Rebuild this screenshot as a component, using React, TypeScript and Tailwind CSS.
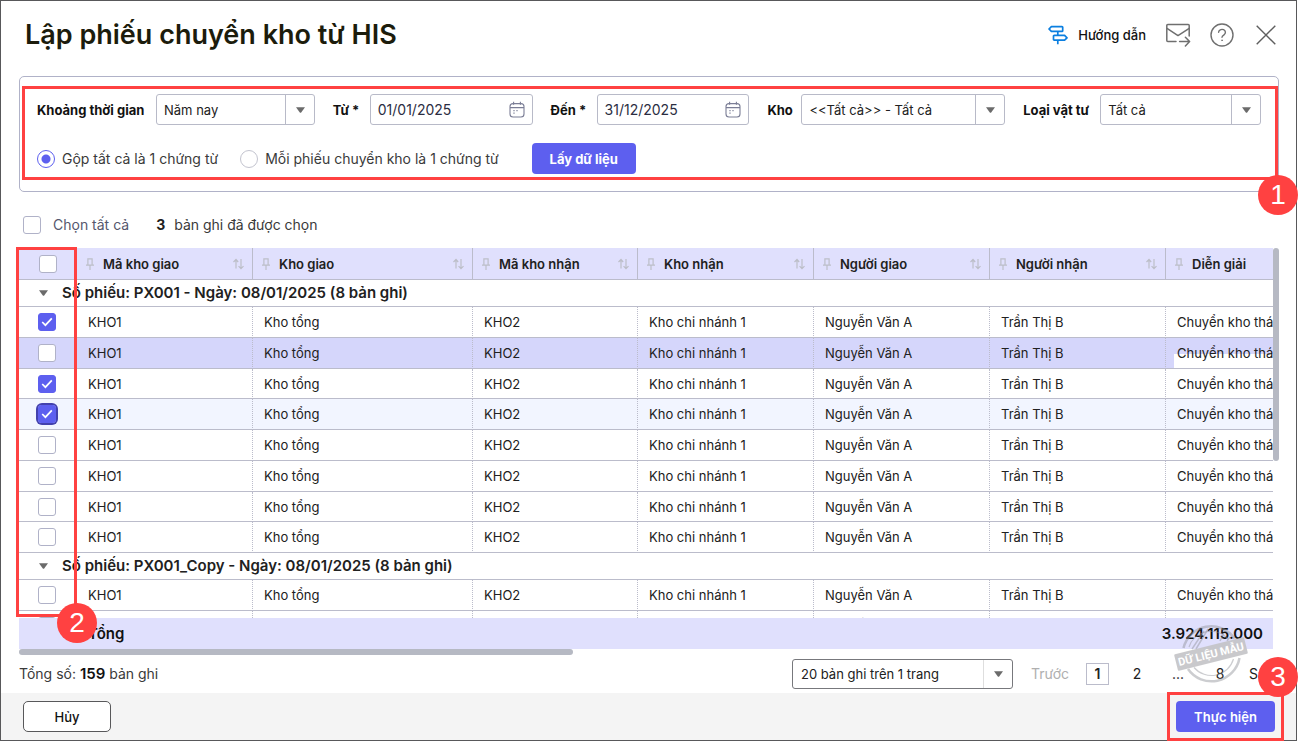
import React, { useState } from 'react';

type Column = { key: string; title: string; width: string };

const COLUMNS: Column[] = [
  { key: 'maKhoGiao', title: 'Mã kho giao', width: 'w-[176px]' },
  { key: 'khoGiao', title: 'Kho giao', width: 'w-[220px]' },
  { key: 'maKhoNhan', title: 'Mã kho nhận', width: 'w-[165px]' },
  { key: 'khoNhan', title: 'Kho nhận', width: 'w-[176px]' },
  { key: 'nguoiGiao', title: 'Người giao', width: 'w-[176px]' },
  { key: 'nguoiNhan', title: 'Người nhận', width: 'w-[176px]' },
  { key: 'dienGiai', title: 'Diễn giải', width: 'w-[176px]' },
];

const RECORD: Record<string, string> = {
  maKhoGiao: 'KHO1',
  khoGiao: 'Kho tổng',
  maKhoNhan: 'KHO2',
  khoNhan: 'Kho chi nhánh 1',
  nguoiGiao: 'Nguyễn Văn A',
  nguoiNhan: 'Trần Thị B',
  dienGiai: 'Chuyển kho tháng',
};

const GROUPS = [
  { id: 'PX001', title: 'Số phiếu: PX001 - Ngày: 08/01/2025 (8 bản ghi)', rows: 8, checked: [0, 2, 3] },
  { id: 'PX001_Copy', title: 'Số phiếu: PX001_Copy - Ngày: 08/01/2025 (8 bản ghi)', rows: 2, checked: [] as number[] },
];

function Triangle() {
  return (
    <svg width="9" height="6" viewBox="0 0 9 6" aria-hidden="true">
      <path d="M0 0.3h9L5.2 5.4q-.7.8-1.4 0z" fill="#6b6b6b" />
    </svg>
  );
}

function PinIcon() {
  return (
    <svg width="8" height="12" viewBox="0 0 8 12" fill="none" stroke="#bcbec8" strokeWidth="1.2" aria-hidden="true">
      <path d="M1.9 6.6V.8h4.2v5.8M0 7.2h8M4 7.4V12" />
    </svg>
  );
}

function SortIcon() {
  return (
    <svg width="11" height="12" viewBox="0 0 11 12" fill="none" stroke="#bcbec8" strokeWidth="1.2" aria-hidden="true">
      <path d="M3 10.5V1.5M.5 4L3 1.5 5.2 4M8 1v9.7M5.6 8.2L8 10.7l2.5-2.5" />
    </svg>
  );
}

function CalendarIcon() {
  return (
    <svg width="16" height="17" viewBox="0 0 16 17" fill="none" stroke="#7b7e96" strokeWidth="1.1" aria-hidden="true">
      <rect x="1" y="2.6" width="14" height="13.4" rx="3" />
      <path d="M1 6.6h14M4.6.8v3M11.4.8v3" />
      <path d="M4.4 9.6h1.2M7.4 9.6h1.2M4.4 12.2h1.2" strokeWidth="1.3" />
    </svg>
  );
}

function SignpostIcon() {
  return (
    <svg width="20" height="20" viewBox="0 0 20 20" fill="none" stroke="#0b7fe0" strokeWidth="1.7" strokeLinejoin="round" aria-hidden="true">
      <path d="M3.4 1.6H14a.7.7 0 0 1 .7.7v3.4a.7.7 0 0 1-.7.7H3.4L1 4z" />
      <path d="M16.6 10.4H6.2a.7.7 0 0 0-.7.7v3.4a.7.7 0 0 0 .7.7h10.4L19 12.8z" />
      <path d="M9.8 6.4v4M9.8 15.2v4" />
    </svg>
  );
}

function MailIcon() {
  return (
    <svg width="26" height="24" viewBox="0 0 26 24" fill="none" stroke="#6f6f6f" strokeWidth="1.5" strokeLinejoin="round" strokeLinecap="round" aria-hidden="true">
      <path d="M11 18.6H2.8a1 1 0 0 1-1-1V2.5a1 1 0 0 1 1-1h20.4a1 1 0 0 1 1 1V13" />
      <path d="M2.4 5.6L13 12.6 23.8 5.6M14.6 18.6h9.6M20.4 14.2l4.2 4.4-4.2 4.4" />
    </svg>
  );
}

function HelpIcon() {
  return (
    <svg width="24" height="24" viewBox="0 0 24 24" fill="none" stroke="#6f6f6f" strokeWidth="1.4" strokeLinecap="round" aria-hidden="true">
      <circle cx="12" cy="12" r="11" />
      <path d="M8.6 9.3a3.4 3 0 1 1 5.4 2.5c-1.300.8-2 1.300-2 2.4" />
      <circle cx="12" cy="17.3" r=".5" fill="#6f6f6f" strokeWidth="0.6" />
    </svg>
  );
}

function CloseIcon() {
  return (
    <svg width="20" height="20" viewBox="0 0 20 20" fill="none" stroke="#5f5f5f" strokeWidth="1.4" aria-hidden="true">
      <path d="M.7.7l18.6 18.6M19.3.7L.7 19.3" />
    </svg>
  );
}

function Checkbox({ label, checked = false, focused = false }: { label: string; checked?: boolean; focused?: boolean }) {
  const [on, setOn] = useState(checked);
  return (
    <span className={`grid place-items-center size-[18px] rounded-[4px] ${focused ? 'ring-2 ring-[#4341ad]' : ''}`}>
      <input
        type="checkbox"
        aria-label={label}
        checked={on}
        onChange={() => setOn(!on)}
        className="peer [grid-area:1/1] appearance-none size-[18px] rounded-[3px] border border-[#b0b2c8] bg-white checked:bg-[#5d5fef] checked:border-[#5d5fef]"
      />
      <svg className="[grid-area:1/1] hidden peer-checked:block pointer-events-none" width="12" height="10" viewBox="0 0 12 10" fill="none" stroke="white" strokeWidth="1.7" aria-hidden="true">
        <path d="M1.2 5l3.2 3.2L10.8 1.4" />
      </svg>
    </span>
  );
}

function Field({ id, label, labelWidth, children }: { id: string; label: string; labelWidth: string; children: React.ReactNode }) {
  return (
    <div className="flex items-center min-w-0">
      <label htmlFor={id} className={`${labelWidth} shrink-0 whitespace-nowrap font-bold text-[#111]`}>
        {label}
      </label>
      {children}
    </div>
  );
}

function SelectBox({ id, value }: { id: string; value: string }) {
  return (
    <div className="relative flex-1 min-w-0 h-[31px]">
      <select id={id} className="appearance-none w-full h-full rounded-[3px] border border-[#b8bac8] bg-white pl-[7px] pr-8 text-[#212121]">
        <option>{value}</option>
      </select>
      <span className="absolute right-0 inset-y-0 w-[30px] border-l border-[#b8bac8] flex items-center justify-center pointer-events-none">
        <Triangle />
      </span>
    </div>
  );
}

function DateBox({ id, value }: { id: string; value: string }) {
  return (
    <div className="flex-1 min-w-0 h-[31px] flex items-center rounded-[3px] border border-[#b8bac8] bg-white px-[7px]">
      <input id={id} type="text" defaultValue={value} className="flex-1 min-w-0 text-[14px] text-[#2b2d42] outline-none" />
      <button type="button" aria-label="Chọn ngày">
        <CalendarIcon />
      </button>
    </div>
  );
}

// Vòng tròn đỏ đánh số bước hướng dẫn
function StepBadge({ step, position }: { step: number; position: string }) {
  return (
    <span className={`absolute z-20 size-10 rounded-full bg-[#ff4141] text-white text-[28px] leading-none flex items-center justify-center font-['Liberation_Sans',sans-serif] ${position}`}>
      {step}
    </span>
  );
}

// Con dấu "Dữ liệu mẫu"
function SampleStamp() {
  return (
    <svg className="absolute z-10 right-[46px] top-[-31px] pointer-events-none" width="76" height="62" viewBox="0 0 76 62" aria-hidden="true">
      <g fill="none" stroke="#8f9097" strokeOpacity="0.45">
        <path d="M9.5 24A28.5 28.5 0 0 1 60.5 14.5" strokeWidth="2.5" />
        <path d="M15 23A23 23 0 0 1 54 15" strokeWidth="1.2" />
        <path d="M18 25L30 7M22 25L34 5M50 9L46 17M56 13L53 17" strokeWidth="1.5" />
        <path d="M14 45A28.5 28.5 0 0 0 65.5 34" strokeWidth="2.5" />
        <path d="M20 43.5A23 23 0 0 0 59.5 35" strokeWidth="1.2" />
      </g>
      <g transform="rotate(-14 37 30)">
        <rect x="1" y="21.5" width="72" height="17" rx="1" fill="#c3c3c7" fillOpacity="0.9" />
        <text x="37" y="34" textAnchor="middle" fontSize="11" fontWeight="700" fill="#fff" fontFamily="Roboto, sans-serif">
          DỮ LIỆU MẪU
        </text>
      </g>
    </svg>
  );
}

function DataTable() {
  return (
    <table className="table-fixed border-separate border-spacing-0 w-[1323px] text-[13px] text-[#212121]">
      <thead>
        <tr className="h-8 bg-[#e0e0fd]">
          <th className="w-[58px] p-0 border-b border-[#bbbccb]">
            <div className="flex justify-center">
              <Checkbox label="Chọn trang này" />
            </div>
          </th>
          {COLUMNS.map((col) => (
            <th key={col.key} className={`${col.width} p-0 border-b border-r border-[#bbbccb] font-semibold text-left`}>
              <div className="flex items-center pl-[9px] pr-2">
                <PinIcon />
                <span className="pl-[9px] flex-1">{col.title}</span>
                <SortIcon />
              </div>
            </th>
          ))}
        </tr>
      </thead>
      {GROUPS.map((group) => (
        <tbody key={group.id}>
          <tr className="h-[27px]">
            <td colSpan={8} className="p-0 border-b border-[#bbbccb]">
              <div className="flex items-center pl-5 text-[15px] leading-5 font-semibold">
                <button type="button" aria-label="Thu gọn" className="w-[23px]">
                  <Triangle />
                </button>
                {group.title}
              </div>
            </td>
          </tr>
          {Array.from({ length: group.rows }, (_, i) => {
            const hovered = group.id === 'PX001' && i === 1;
            const focused = group.id === 'PX001' && i === 3;
            return (
              <tr key={i} className={`h-[31px] nth-[4n]:h-[30px] ${hovered ? 'bg-[#d5d6fb]' : focused ? 'bg-[#f2f5ff]' : 'bg-white'}`}>
                <td className="p-0 border-b border-[#bbbccb]">
                  <div className="flex justify-center pr-[3px]">
                    <Checkbox label={`Chọn dòng ${i + 1}`} checked={group.checked.includes(i)} focused={focused} />
                  </div>
                </td>
                {COLUMNS.map((col) => (
                  <td
                    key={col.key}
                    className="relative p-0 pl-[11px] border-b border-r border-[#bbbccb] [border-right-style:dotted] whitespace-nowrap leading-5"
                  >
                    {hovered && col.key === 'dienGiai' && <span className="absolute left-2 right-0 bottom-0 h-[14px] bg-white" />}
                    <span className="relative">{RECORD[col.key]}</span>
                  </td>
                ))}
              </tr>
            );
          })}
        </tbody>
      ))}
    </table>
  );
}

export default function App() {
  return (
    <div className="mr-[2px] h-screen min-w-[1100px] flex flex-col border border-[#58585a] bg-white text-[13px] leading-5 text-[#212121] font-['Inter','Open_Sans',sans-serif]">
      {/* Tiêu đề */}
      <header className="shrink-0 h-[67px] mb-2 pl-6 pr-5 flex items-center justify-between">
        <h1 className="text-[27px] leading-8 font-semibold text-[#1c1c0c]">Lập phiếu chuyển kho từ HIS</h1>
        <div className="flex items-center">
          <a href="#huong-dan" className="flex items-center gap-[10px] font-medium text-[#111]">
            <SignpostIcon />
            Hướng dẫn
          </a>
          <button type="button" aria-label="Gửi thư" className="ml-[19px]">
            <MailIcon />
          </button>
          <button type="button" aria-label="Trợ giúp" className="ml-[19px]">
            <HelpIcon />
          </button>
          <button type="button" aria-label="Đóng" className="ml-[22px]">
            <CloseIcon />
          </button>
        </div>
      </header>

      {/* Bộ lọc */}
      <section className="relative shrink-0 ml-[18px] mr-[17px] h-[116px] px-[17px] pt-[17px] rounded-[5px] border border-[#b0b2c8]">
        <div className="grid grid-cols-[278fr_200fr_199fr_238fr_238fr] gap-x-[18px]">
          <Field id="range" label="Khoảng thời gian" labelWidth="w-[119px]">
            <SelectBox id="range" value="Năm nay" />
          </Field>
          <Field id="from" label="Từ *" labelWidth="w-[37px]">
            <DateBox id="from" value="01/01/2025" />
          </Field>
          <Field id="to" label="Đến *" labelWidth="w-[46px]">
            <DateBox id="to" value="31/12/2025" />
          </Field>
          <Field id="warehouse" label="Kho" labelWidth="w-[34px]">
            <SelectBox id="warehouse" value="<<Tất cả>> - Tất cả" />
          </Field>
          <Field id="kind" label="Loại vật tư" labelWidth="w-[77px]">
            <SelectBox id="kind" value="Tất cả" />
          </Field>
        </div>
        <div className="mt-[18px] h-[31px] flex items-center text-[14px] text-[#3a3a3a]">
          <label className="flex items-center gap-[7px]">
            <input type="radio" name="mode" defaultChecked className="appearance-none size-[18px] rounded-full border border-[#5d5fef] bg-[radial-gradient(circle,#5d5fef_4px,white_5px)]" />
            Gộp tất cả là 1 chứng từ
          </label>
          <label className="ml-[22px] flex items-center gap-[7px]">
            <input type="radio" name="mode" className="appearance-none size-[18px] rounded-full border border-[#c3c4cf] bg-white" />
            Mỗi phiếu chuyển kho là 1 chứng từ
          </label>
          <button type="button" className="ml-[33px] h-[31px] w-[104px] rounded-[4px] bg-[#5d5fef] text-[13px] font-bold text-white">
            Lấy dữ liệu
          </button>
        </div>
        <div className="absolute left-[2px] right-0 top-[9px] h-[94px] border-3 border-[#ff4141] pointer-events-none" />
        <StepBadge step={1} position="right-[-20px] top-[98px]" />
      </section>

      <div className="shrink-0 h-14 pt-[10px] pl-[22px] flex items-center text-[14px]">
        <label className="flex items-center gap-3 text-[#55576d]">
          <Checkbox label="Chọn tất cả" />
          Chọn tất cả
        </label>
        <b className="ml-[27px] font-bold">3</b>
        <span className="ml-[9px] text-[#3a3a3a]">bản ghi đã được chọn</span>
      </div>

      {/* Bảng dữ liệu */}
      <div className="relative flex-1 min-h-0 ml-[18px] mr-[17px] flex flex-col">
        <div className="flex-1 min-h-0 flex">
          <div className="flex-1 min-w-0 flex flex-col">
            <div className="flex-1 min-h-0 overflow-hidden">
              <DataTable />
            </div>
            <div className="shrink-0 h-[31px] pl-[69px] pr-[10px] flex items-center justify-between bg-[#e0e0fd] text-[15px] font-semibold text-[#111]">
              <span>Tổng</span>
              <span>3.924.115.000</span>
            </div>
          </div>
          <div className="w-[6px]">
            <div className="h-[53%] rounded-full bg-[#b6b9c3]" />
          </div>
        </div>
        <div className="w-[44%] h-[6px] rounded-full bg-[#b6b9c3]" />
        <div className="absolute left-[-3px] top-[-1px] bottom-[38px] w-[61px] border-3 border-[#ff4141] pointer-events-none" />
        <StepBadge step={2} position="left-[38px] bottom-[12px]" />
      </div>

      {/* Phân trang */}
      <div className="relative shrink-0 h-[38px] pl-[18px] flex items-center justify-between text-[14px]">
        <span className="text-[#3a3a3a]">
          Tổng số: <b className="text-[15px] font-semibold text-[#111]">159</b> bản ghi
        </span>
        <nav className="flex items-center" aria-label="Phân trang">
          <div className="relative w-[221px] h-[30px] text-[13px]">
            <select aria-label="Số bản ghi trên trang" className="appearance-none w-full h-full rounded-[3px] border border-[#77787c] bg-white pl-2 pr-8 text-[#212121]">
              <option>20 bản ghi trên 1 trang</option>
            </select>
            <span className="absolute right-px inset-y-px w-[29px] border-l border-[#dedede] flex items-center justify-center pointer-events-none">
              <Triangle />
            </span>
          </div>
          <a href="#truoc" className="ml-[18px] w-[55px] text-[#afafaf]">Trước</a>
          <a href="#1" className="w-[23px] h-[22px] border border-[#bbbccb] flex items-center justify-center font-semibold">1</a>
          <a href="#2" className="ml-[17px] w-[22px] text-center">2</a>
          <span className="ml-[19px] w-[22px] text-center">...</span>
          <a href="#8" className="ml-5 w-[22px] text-center">8</a>
          <a href="#sau" className="ml-[18px] w-[47px]">Sau</a>
        </nav>
        <SampleStamp />
        <StepBadge step={3} position="right-[-2px] top-[2px]" />
      </div>

      {/* Chân trang */}
      <footer className="shrink-0 h-[47px] pl-[22px] pr-[21px] flex items-center justify-between bg-[#f4f4f4] font-medium">
        <button type="button" className="h-[31px] w-[88px] rounded-[5px] border border-[#58585a] bg-white text-[#111]">
          Hủy
        </button>
        <div className="relative">
          <button type="button" className="h-[31px] w-[99px] rounded-[4px] bg-[#5d5fef] font-semibold text-white">
            Thực hiện
          </button>
          <div className="absolute -inset-[9px] border-3 border-[#ff4141] pointer-events-none" />
        </div>
      </footer>
    </div>
  );
}
